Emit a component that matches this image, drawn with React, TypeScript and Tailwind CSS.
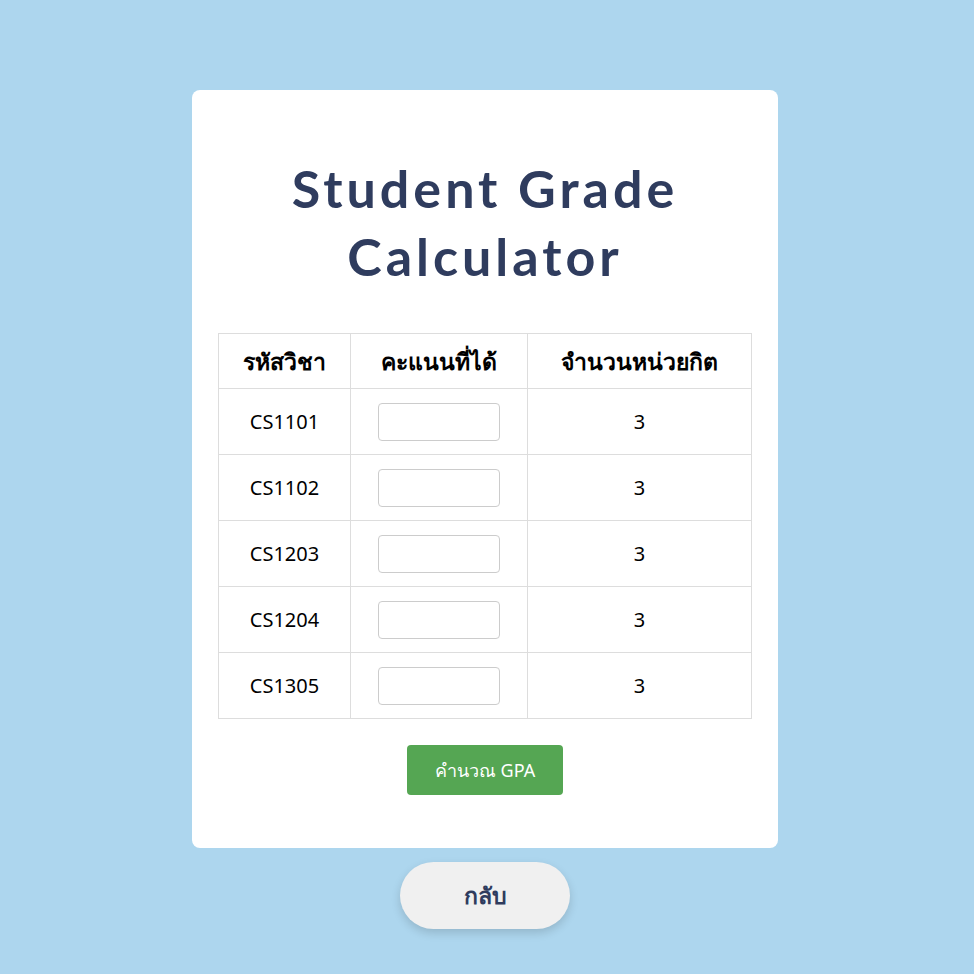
import { useState } from "react"

const courses = [
  { code: "CS1101", credit: 3 },
  { code: "CS1102", credit: 3 },
  { code: "CS1203", credit: 3 },
  { code: "CS1204", credit: 3 },
  { code: "CS1305", credit: 3 },
]

export default function App() {
  const [scores, setScores] = useState<string[]>(courses.map(() => ""))

  return (
    <div
      className="min-h-[974px] bg-[#add6ee] flex flex-col items-center pt-[90px] pb-[45px] pr-[4px]"
      style={{ fontFamily: '"Noto Sans", "DejaVu Sans", sans-serif' }}
    >
      <div className="w-[586px] bg-white rounded-lg px-[26px] pt-[64px] pb-[53px] flex flex-col items-center">
        <h1 className="text-[52px] leading-[68px] font-bold text-[#2f3c5e] text-center tracking-[4px] w-[500px] font-['Lato',sans-serif]">
          Student Grade Calculator
        </h1>

        <table className="w-full mt-[43px] border-collapse text-center text-black text-[20px]">
          <thead>
            <tr className="h-[55px]">
              <th className="w-[132px] border border-[#dddddd] font-bold text-[23px]">รหัสวิชา</th>
              <th className="w-[177px] border border-[#dddddd] font-bold text-[23px]">คะแนนที่ได้</th>
              <th className="border border-[#dddddd] font-bold text-[23px]">จำนวนหน่วยกิต</th>
            </tr>
          </thead>
          <tbody>
            {courses.map((c, i) => (
              <tr key={c.code} className="h-[66px]">
                <td className="border border-[#dddddd]">{c.code}</td>
                <td className="border border-[#dddddd]">
                  <input
                    type="number"
                    value={scores[i]}
                    onChange={(e) => {
                      const next = [...scores]
                      next[i] = e.target.value
                      setScores(next)
                    }}
                    className="w-[122px] h-[38px] border border-[#cccccc] rounded px-2 outline-none align-middle"
                  />
                </td>
                <td className="border border-[#dddddd]">{c.credit}</td>
              </tr>
            ))}
          </tbody>
        </table>

        <button className="mt-[26px] w-[156px] h-[50px] bg-[#55a653] text-white text-[18px] rounded">
          คำนวณ GPA
        </button>
      </div>

      <button className="mt-[14px] w-[170px] h-[67px] rounded-full bg-[#f0f0f0] text-[#2f3c5e] text-[23px] font-bold shadow-[0_4px_10px_rgba(0,0,0,0.15)]">
        กลับ
      </button>
    </div>
  )
}
